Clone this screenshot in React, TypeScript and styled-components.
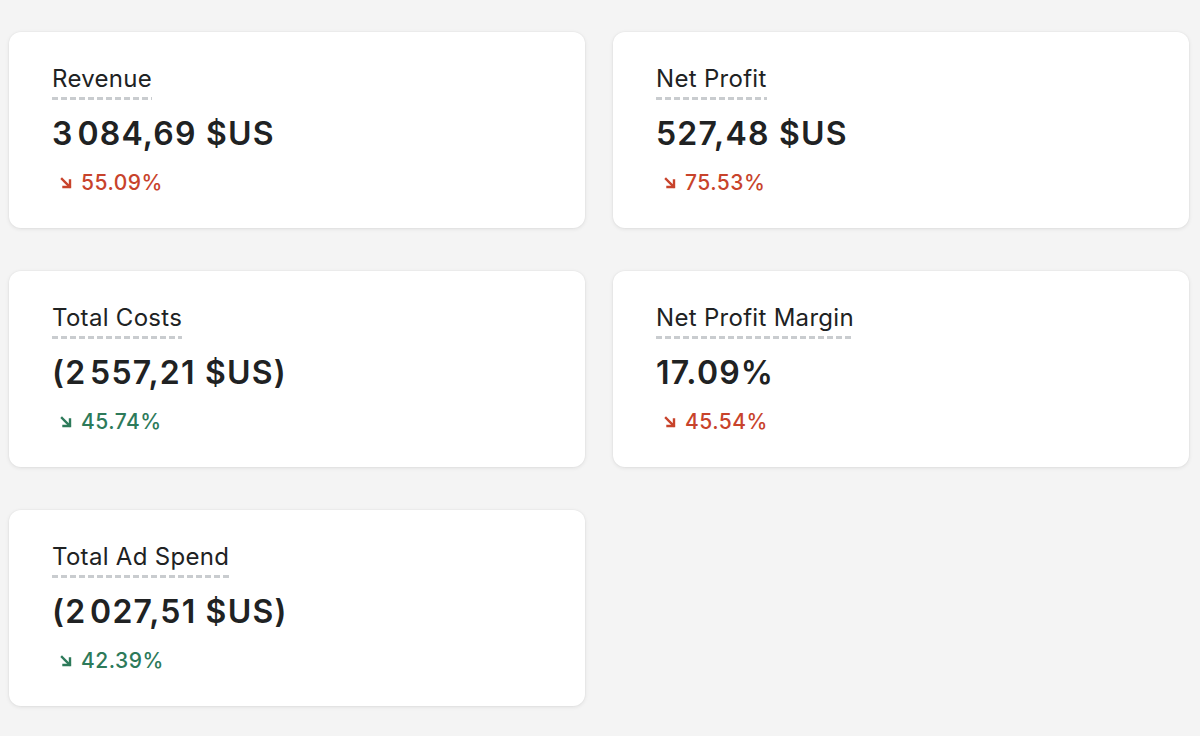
import React from 'react'
import styled, { createGlobalStyle } from 'styled-components'

const GlobalStyle = createGlobalStyle`
  html, body {
    margin: 0;
    padding: 0;
    background: #f4f4f4;
  }
  body {
    font-family: Inter, "Noto Sans", "Liberation Sans", sans-serif;
    color: #202223;
    -webkit-font-smoothing: antialiased;
  }
`

const Page = styled.div`
  width: 1200px;
  height: 736px;
  box-sizing: border-box;
  padding: 32px 0 0 9px;
  overflow: hidden;
`

const Grid = styled.div`
  display: grid;
  grid-template-columns: 576px 576px;
  grid-auto-rows: 196px;
  column-gap: 28px;
  row-gap: 43px;
`

const Card = styled.div`
  background: #ffffff;
  border-radius: 12px;
  box-shadow: 0 1px 4px rgba(0, 0, 0, 0.09), 0 0 0 1px rgba(0, 0, 0, 0.015);
  box-sizing: border-box;
  padding: 32px 43px 0;
  display: flex;
  flex-direction: column;
  align-items: flex-start;
`

const Label = styled.span`
  font-size: 24px;
  line-height: 30px;
  font-weight: 400;
  letter-spacing: 0.3px;
  color: #202223;
  padding-bottom: 6px;
  background-image: linear-gradient(to right, #c9cccf 0 6px, transparent 6px 9px);
  background-size: 9px 3px;
  background-repeat: repeat-x;
  background-position: 0 100%;
`

const Value = styled.div`
  margin-top: 14px;
  font-size: 32px;
  line-height: 40px;
  font-weight: 600;
  letter-spacing: 1.2px;
  color: #202223;
`

const Change = styled.div<{ $good: boolean }>`
  margin-top: 15px;
  padding-left: 8px;
  display: flex;
  align-items: center;
  gap: 9px;
  font-size: 21px;
  line-height: 28px;
  font-weight: 500;
  letter-spacing: 0.5px;
  color: ${({ $good }) => ($good ? '#2d7a5a' : '#c8432b')};
`

const ArrowIcon = () => (
  <svg width="12" height="12" viewBox="0 0 12 12" fill="none">
    <path d="M2 2 L9.5 9.5" stroke="currentColor" strokeWidth="2.4" strokeLinecap="square" />
    <path d="M10 3.5 V10 H3.5" stroke="currentColor" strokeWidth="2.4" strokeLinecap="square" />
  </svg>
)

type Metric = {
  label: string
  value: string
  change: string
  good: boolean
}

const metrics: Metric[] = [
  { label: 'Revenue', value: '3\u200A084,69 $US', change: '55.09%', good: false },
  { label: 'Net Profit', value: '527,48 $US', change: '75.53%', good: false },
  { label: 'Total Costs', value: '(2\u200A557,21 $US)', change: '45.74%', good: true },
  { label: 'Net Profit Margin', value: '17.09%', change: '45.54%', good: false },
  { label: 'Total Ad Spend', value: '(2\u200A027,51 $US)', change: '42.39%', good: true },
]

export default function App() {
  return (
    <Page>
      <GlobalStyle />
      <Grid>
        {metrics.map(m => (
          <Card key={m.label}>
            <Label>{m.label}</Label>
            <Value>{m.value}</Value>
            <Change $good={m.good}>
              <ArrowIcon />
              {m.change}
            </Change>
          </Card>
        ))}
      </Grid>
    </Page>
  )
}
